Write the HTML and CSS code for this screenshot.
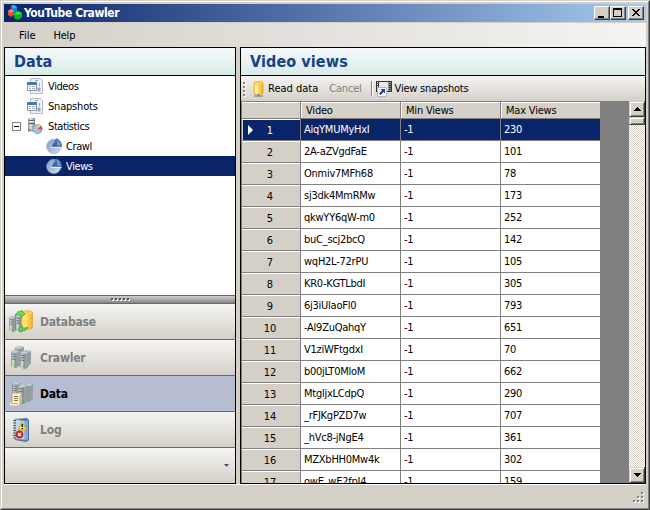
FILE: index.html
```html
<!DOCTYPE html>
<html lang="en">
<head>
<meta charset="utf-8">
<title>YouTube Crawler</title>
<link rel="stylesheet" href="styles.css">
</head>
<body>
<svg class="defs" width="0" height="0">
  <defs>
    <linearGradient id="metal"><stop offset="0" stop-color="#858b8f"/><stop offset=".35" stop-color="#dfe3e5"/><stop offset="1" stop-color="#7d8488"/></linearGradient>
    <linearGradient id="gold"><stop offset="0" stop-color="#ffd765"/><stop offset=".4" stop-color="#ffe673"/><stop offset="1" stop-color="#f5ac1c"/></linearGradient>
    <linearGradient id="blue" x2="1" y2="1"><stop offset="0" stop-color="#7d9cc9"/><stop offset="1" stop-color="#d3deee"/></linearGradient>
    <symbol id="table" viewBox="0 0 16 16">
      <path d="M3.500.5h10l2 2v13h-12z" fill="#eef0f2" stroke="#b5bbc0"/>
      <path d="M8 2.500h3M12.500 5v3M11 10h2v3h-2z" fill="#a7b0ba" stroke="#9ba4ae"/>
      <path d="M.5 4.500h9v8h-9z" fill="#fff" stroke="#8193aa"/>
      <path d="M0 4h10v3H0z" fill="#4a76ad"/>
      <path d="M2 8.500h2M5 8.500h3M2 10.500h2M5 10.500h3" stroke="#9fabb9"/>
    </symbol>
    <symbol id="stats" viewBox="0 0 16 16">
      <path d="M1 1l2-1h5v14H1z" fill="url(#metal)"/>
      <path d="M2 2.500h5M2 5.500h5" stroke="#596268"/><path d="M2 3.500h5" stroke="#f4f6f6"/>
      <path d="M2 11h2v2H2z" fill="#45b738"/>
      <circle cx="10.500" cy="11" r="4.700" fill="#a9bfe4" stroke="#708cbf" stroke-width=".7"/>
      <path d="M10.500 11V6.300A4.700 4.700 0 0 1 14 8z" fill="#f6d642"/>
      <path d="M10.500 11L14 8A4.700 4.700 0 0 1 15 12z" fill="#e24935"/>
    </symbol>
    <symbol id="pie" viewBox="0 0 16 16">
      <circle cx="7.800" cy="8.500" r="7.200" fill="url(#blue)" stroke="#8ca4c8" stroke-width=".6"/>
      <path d="M5.300 9.200h10.500" fill="none" stroke="#fff"/>
      <path d="M5 8.500L10.500 1v7.500z" fill="#e8f0fa"/>
      <path d="M6 8.300L10.500.8c3 .7 4.700 3.400 5 7.500z" fill="#6d96d2" stroke="#284f8f" stroke-width=".8"/>
      <path d="M6 8h5V2z" fill="#3c68a9"/>
    </symbol>
    <symbol id="tower" viewBox="0 0 9 18">
      <path d="M0 2l3-2 6 1v14l-4 3-5-2z" fill="#737b80"/>
      <path d="M0 2l5 1v15l-5-2z" fill="url(#metal)"/>
      <path d="M1 4l3 .6M1 6.500l3 .6M1 9l3 .6" stroke="#656d73"/>
      <path d="M5 3l4-2v14l-4 3z" fill="#979fa3"/>
      <path d="M0 2l3-2 6 1-4 2z" fill="#c9d0d3"/>
      <path d="M3 14h1.500v2H3z" fill="#42e21d"/>
    </symbol>
    <symbol id="database" viewBox="0 0 24 24">
      <use href="#tower" x="0" y="5" width="8" height="18"/>
      <use href="#tower" x="6" y="4" width="10" height="18"/>
      <path d="M12.500 3c0-3 11-3 11 0v14c0 3-11 3-11 0z" fill="url(#gold)" stroke="#e6a128" stroke-width=".7"/>
      <ellipse cx="18" cy="3" rx="5" ry="1.700" fill="#ffcf58"/>
      <path d="M6 6c1-4 4-5 6-4.500V0l4 4-4 3.500V5C9 4.500 7 5 6 6z" fill="#6bdb4e" stroke="#258f20" stroke-width=".6"/>
      <path d="M19 17c-1 3-3 4-6 3.500V22l-4-2.500 4-4V18c3 0 4 0 6-1z" fill="#6bdb4e" stroke="#258f20" stroke-width=".6"/>
    </symbol>
    <symbol id="crawler" viewBox="0 0 24 24">
      <use href="#tower" x="6" y="0" width="9" height="18"/>
      <use href="#tower" x="2" y="4" width="9" height="18"/>
      <use href="#tower" x="14" y="3" width="8" height="18"/>
      <use href="#tower" x="11" y="5" width="9" height="18"/>
    </symbol>
    <symbol id="data" viewBox="0 0 24 24">
      <use href="#tower" x="3" y="0" width="9" height="17"/>
      <use href="#tower" x="15" y="1" width="9" height="19"/>
      <use href="#tower" x="9" y="1" width="10" height="22"/>
      <path d="M3 11h8c2 0 2 3 0 3v7c0 3-2 3-4 3H1c-2-1-1-4 1-4h1v-7z" fill="#fff1c9" stroke="#b99b63" stroke-width=".8"/>
      <path d="M5 14.500h4M5 16.500h4M5 18.500h4" stroke="#867a58"/><path d="M2 21.500h7" stroke="#c6a86c"/>
    </symbol>
    <symbol id="log" viewBox="0 0 18 24">
      <path d="M3 1l12-1 2 2v20l-3 2L3 22z" fill="#4970a7"/>
      <path d="M3 1l10 2v19L3 21z" fill="#bdd7f2" stroke="#6687ad" stroke-width=".7"/>
      <path d="M13 3l3-1v19l-3 2z" fill="#7dabdc"/>
      <path d="M1 2.500h3M1 5h3M1 7.500h3M1 10h3M1 12.500h3M1 15h3M1 17.500h3M1 20h3" stroke="#566979"/>
      <path d="M10 4l5 8H6z" fill="#ffdf17" stroke="#c39814" stroke-width=".7"/>
      <path d="M10.300 6v3M10.300 10v1.300" stroke="#28240a" stroke-width="1.400"/>
      <circle cx="7.500" cy="16.500" r="3.900" fill="#cf2424"/><path d="M6 15l3 3m0-3l-3 3" stroke="#fff" stroke-width="1.400"/>
    </symbol>
  </defs>
</svg>
<div class="window">
  <div class="face">
    <header class="titlebar">
      <svg class="logo" width="16" height="16" viewBox="0 0 16 16"><path d="M4 1l3-1 3 2v4L7 8 4 6z" fill="#0783d5"/><path d="M4 1l3-1 3 2-3 2z" fill="#20b8ff"/><path d="M1 6l3-2 3 2v4l-3 2-3-2z" fill="#ef512d"/><path d="M1 6l3-2 3 2-3 2z" fill="#ff8557"/><path d="M7 9l3.500-3L15 8v4.500L11 15l-4-2z" fill="#07b518"/><path d="M7 9l3.500-3L15 8l-4 2z" fill="#38e62f"/></svg>
      <h1 class="caption">YouTube Crawler</h1>
      <div class="controls">
        <span class="btn"><svg width="14" height="12"><path d="M3 9h6v2H3z"/></svg></span>
        <span class="btn"><svg width="14" height="12"><path d="M2 1h9v9H2zM3 3v6h7V3z" fill-rule="evenodd"/></svg></span>
        <span class="btn close"><svg width="14" height="12" shape-rendering="crispEdges"><path d="M3 2h2v1h1v1h2V3h1V2h2v1h-1v1H9v1H8v1h1v1h1v1h1v1H9V8H8V7H6v1H5v1H3V8h1V7h1V6h1V5H5V4H4V3H3z"/></svg></span>
      </div>
    </header>
    <nav class="menubar"><span class="menu-file">File</span><span class="menu-help">Help</span></nav>
    <main class="workspace">
      <aside class="panel sidebar">
        <h2 class="panel-title"><span class="title-data">Data</span></h2>
        <div class="tree">
          <div class="node"><svg class="icon"><use href="#table"/></svg><span>Videos</span></div>
          <div class="node"><svg class="icon"><use href="#table"/></svg><span class="snapshots">Snapshots</span></div>
          <div class="node parent"><i class="toggle"></i><svg class="icon"><use href="#stats"/></svg><span>Statistics</span></div>
          <div class="node child"><svg class="icon"><use href="#pie"/></svg><span>Crawl</span></div>
          <div class="node child selected"><svg class="icon"><use href="#pie"/></svg><span>Views</span></div>
        </div>
        <div class="splitter"><i></i><i></i><i></i><i></i><i></i></div>
        <div class="section"><svg class="big"><use href="#database"/></svg><span class="nav-db">Database</span></div>
        <div class="section"><svg class="big"><use href="#crawler"/></svg><span class="nav-crawler">Crawler</span></div>
        <div class="section active"><svg class="big"><use href="#data"/></svg><span>Data</span></div>
        <div class="section"><svg class="big"><use href="#log"/></svg><span>Log</span></div>
        <div class="section last"><svg width="5" height="3"><path d="M0 0h5L2.500 3z" fill="#4b5065"/></svg></div>
      </aside>
      <section class="panel content">
        <h2 class="panel-title"><span class="title-views">Video views</span></h2>
        <div class="toolbar">
          <div class="grip"><i></i><i></i><i></i><i></i></div>
          <svg class="icon cyl" viewBox="0 0 16 16"><path d="M4 2c0-2 9-2 9 0v10c0 2-9 2-9 0z" fill="url(#gold)" stroke="#e6a421" stroke-width=".8"/><ellipse cx="8.500" cy="2.200" rx="4" ry="1.200" fill="#ffd34e"/><path d="M6 4v8" stroke="#fff6bf" stroke-width="1.500"/><path d="M4 15h9M8.500 13v2" stroke="#657381"/></svg>
          <span class="tool-read">Read data</span><span class="tool-cancel">Cancel</span><i class="divider"></i>
          <svg class="film" width="16" height="16" viewBox="0 0 16 16"><path d="M.5.500h15v10H.500z" fill="#e4e8ea" stroke="#30343a"/><path d="M1.500 0v11M14 0v11" stroke="#30343a" stroke-width="3"/><path d="M1.500 1v9M14 1v9" stroke="#ecf1ef" stroke-width="1" stroke-dasharray="1 1"/><path d="M1.500 6.500h9v9h-9z" fill="#f5f7fc" stroke="#aeb7ca"/><path d="M4.500 8H9v4.500L7.500 11 4.500 14 3 12.500l3-3z" fill="#293f9a"/></svg>
          <span class="tool-snap">View snapshots</span>
        </div>
        <div class="data">
          <div class="grid">
            <div class="row head"><b></b><span>Video</span><span>Min Views</span><span>Max Views</span></div>
            <div class="row current"><b>1</b><span>AiqYMUMyHxI</span><span>-1</span><span>230</span></div>
            <div class="row"><b>2</b><span>2A-aZVgdFaE</span><span>-1</span><span>101</span></div>
            <div class="row"><b>3</b><span>Onmiv7MFh68</span><span>-1</span><span>78</span></div>
            <div class="row"><b>4</b><span>sj3dk4MmRMw</span><span>-1</span><span>173</span></div>
            <div class="row"><b>5</b><span>qkwYY6qW-m0</span><span>-1</span><span>252</span></div>
            <div class="row"><b>6</b><span>buC_scj2bcQ</span><span>-1</span><span>142</span></div>
            <div class="row"><b>7</b><span>wqH2L-72rPU</span><span>-1</span><span>105</span></div>
            <div class="row"><b>8</b><span>KR0-KGTLbdI</span><span>-1</span><span>305</span></div>
            <div class="row"><b>9</b><span>6j3iUlaoFl0</span><span>-1</span><span>793</span></div>
            <div class="row"><b>10</b><span>-Al9ZuQahqY</span><span>-1</span><span>651</span></div>
            <div class="row"><b>11</b><span>V1ziWFtgdxI</span><span>-1</span><span>70</span></div>
            <div class="row"><b>12</b><span>b00jLT0MloM</span><span>-1</span><span>662</span></div>
            <div class="row"><b>13</b><span>MtgljxLCdpQ</span><span>-1</span><span>290</span></div>
            <div class="row"><b>14</b><span>_rFJKgPZD7w</span><span>-1</span><span>707</span></div>
            <div class="row"><b>15</b><span>_hVc8-jNgE4</span><span>-1</span><span>361</span></div>
            <div class="row"><b>16</b><span>MZXbHH0Mw4k</span><span>-1</span><span>302</span></div>
            <div class="row"><b>17</b><span>owE_wE2fpJ4</span><span>-1</span><span>159</span></div>
          </div>
          <div class="scrollbar">
            <span class="sbtn"><svg width="7" height="4"><path d="M3 0h1v1h1v1h1v1h1v1H0V3h1V2h1V1h1z"/></svg></span>
            <span class="thumb"></span>
            <span class="track"></span>
            <span class="sbtn"><svg width="7" height="4"><path d="M0 0h7v1H6v1H5v1H4v1H3V3H2V2H1V1H0z"/></svg></span>
          </div>
        </div>
      </section>
    </main>
    <footer class="status">
      <svg width="12" height="12" shape-rendering="crispEdges"><path d="M9 1h2v2H9zM5 5h2v2H5zM9 5h2v2H9zM1 9h2v2H1zM5 9h2v2H5zM9 9h2v2H9z" fill="#fff"/><path d="M8 0h2v2H8zM4 4h2v2H4zM8 4h2v2H8zM0 8h2v2H0zM4 8h2v2H4zM8 8h2v2H8z" fill="#808080"/></svg>
    </footer>
  </div>
</div>
</body>
</html>
```
FILE: styles.css
```css
* { box-sizing: border-box; }
body { margin: 0; overflow: hidden; font: 11px/14px "DejaVu Sans Condensed", "DejaVu Sans", sans-serif; color: #000; }
h1, h2 { margin: 0; }
i { font-style: normal; }
span { white-space: nowrap; }
.defs { position: absolute; }
.window { width: 650px; height: 510px; background: #d4d0c8; border: 1px solid; border-color: #d4d0c8 #404040 #404040 #d4d0c8; }
.face { width: 648px; height: 508px; border: 1px solid; border-color: #fff #808080 #808080 #fff; padding: 2px; display: flex; flex-direction: column; }
.titlebar { height: 18px; display: flex; align-items: center; padding: 0 2px 0 3px; background: linear-gradient(90deg, #0a246a, #a6caf0); }
.caption { color: #fff; font-size: 12px; line-height: 18px; letter-spacing: -.4px; flex: 1; margin-left: 1px; }
.controls { display: flex; }
.btn { width: 16px; height: 14px; background: #d4d0c8; border: 1px solid; border-color: #fff #404040 #404040 #fff; box-shadow: inset -1px -1px #808080; }
.btn svg, .sbtn svg { display: block; }
.close { margin-left: 2px; }
.menubar { height: 25px; padding: 6px 0 0 15px; background: linear-gradient(90deg, #d4d0c8, #f5f4f2); border-top: 1px solid #d4d0c8; }
.menu-help { margin-left: 18px; letter-spacing: -.2px; }
.workspace { height: 437px; display: flex; gap: 4px; }
.panel { height: 437px; border: 1px solid #000; display: flex; flex-direction: column; overflow: hidden; }
.sidebar { width: 232px; background: #fff; }
.content { width: 406px; background: #808080; }
.panel-title { height: 28px; flex: none; border-bottom: 1px solid #000; padding-left: 9px; background: linear-gradient(#f6f9fc, #d9ebe6); color: #15428b; font-size: 16px; line-height: 28px; }
.title-views { letter-spacing: .1px; }
.tree { height: 219px; flex: none; }
.node { height: 20px; display: flex; align-items: center; padding-left: 22px; }
.node span { margin-left: 5px; padding-top: 1px; letter-spacing: -.4px; }
.node .snapshots { letter-spacing: -.2px; }
.icon { width: 16px; height: 16px; flex: none; }
.parent { padding-left: 7px; }
.toggle { width: 9px; height: 9px; border: 1px solid #808080; margin-right: 6px; background: linear-gradient(#000, #000) center / 5px 1px no-repeat; }
.child { padding-left: 41px; }
.child span { margin-left: 4px; }
.selected { background: #0a246a; color: #fff; }
.splitter { height: 9px; flex: none; border: solid #666; border-width: 1px 0; background: linear-gradient(#d2cfc8, #858585); display: flex; justify-content: center; gap: 2px; padding-top: 2px; }
.splitter i { width: 2px; height: 2px; background: #555; box-shadow: 1px 1px #fff; }
.section { height: 36px; flex: none; display: flex; align-items: center; padding-left: 4px; border-bottom: 1px solid #666; background: linear-gradient(#f5f4f2, #d4d0c8); color: #808080; font-size: 12px; font-weight: bold; }
.section span { margin-left: 7px; padding-top: 1px; letter-spacing: -.2px; }
.big { width: 24px; height: 24px; }
.active { background: #b6bdd2; color: #000; }
.last { height: 35px; border: 0; justify-content: flex-end; padding-right: 6px; }
.toolbar { height: 25px; flex: none; display: flex; align-items: center; background: linear-gradient(#f5f4f2, #d4d0c8); }
.grip { display: flex; flex-direction: column; gap: 2px; margin-left: 2px; }
.grip i { width: 2px; height: 2px; background: #888; box-shadow: 1px 1px #fff; }
.cyl { margin-left: 5px; }
.tool-read { margin-left: 2px; }
.tool-cancel { margin-left: 11px; color: #808080; letter-spacing: -.2px; }
.divider { width: 2px; height: 15px; margin-left: 9px; background: linear-gradient(90deg, #888 50%, #fff 50%); }
.film { margin-left: 3px; }
.tool-snap { margin-left: 3px; letter-spacing: -.22px; }
.data { flex: 1; min-height: 0; display: flex; justify-content: space-between; overflow: hidden; }
.grid { width: 360px; padding-top: 1px; }
.row { display: grid; grid-template-columns: 60px 100px 100px 100px; height: 22px; color: #000; }
.row > * { border: solid #808080; border-width: 0 1px 1px 0; line-height: 22px; padding-left: 3px; overflow: hidden; }
.row span { background: #fff; letter-spacing: -.25px; }
.row b { font-weight: normal; text-align: center; background: #d4d0c8; border-left: 1px solid #808080; padding: 0 2px 0 0; box-shadow: inset 0 1px #fff, inset 1px 0 #d4d0c8; line-height: 23px; }
.row.head { height: 17px; }
.row.head span { background: #d4d0c8; line-height: 18px; padding-left: 5px; box-shadow: inset 0 1px #fff, inset 1px 0 #fff; letter-spacing: -.2px; }
.row.current span { background: #0a246a; color: #fff; }
.row.current b { background: #0a246a; color: #fff; position: relative; }
.current b::before { content: ""; position: absolute; left: 6px; top: 6px; border: solid transparent; border-width: 5px 0 5px 5px; border-left-color: #fff; }
.scrollbar { width: 16px; display: flex; flex-direction: column; }
.sbtn { height: 16px; display: flex; align-items: center; justify-content: center; background: #d4d0c8; border: 1px solid; border-color: #d4d0c8 #404040 #404040 #d4d0c8; box-shadow: inset 1px 1px #fff, inset -1px -1px #808080; }
.thumb { height: 8px; background: #d4d0c8; border: 1px solid; border-color: #d4d0c8 #404040 #404040 #d4d0c8; box-shadow: inset 1px 1px #fff, inset -1px -1px #808080; }
.track { flex: 1; background: repeating-conic-gradient(#fff 0 25%, #d4d0c8 0 50%) 0 0 / 2px 2px; }
.status { flex: 1; border-top: 1px solid #fff; display: flex; justify-content: flex-end; align-items: flex-end; padding: 0 1px 2px 0; }
```
